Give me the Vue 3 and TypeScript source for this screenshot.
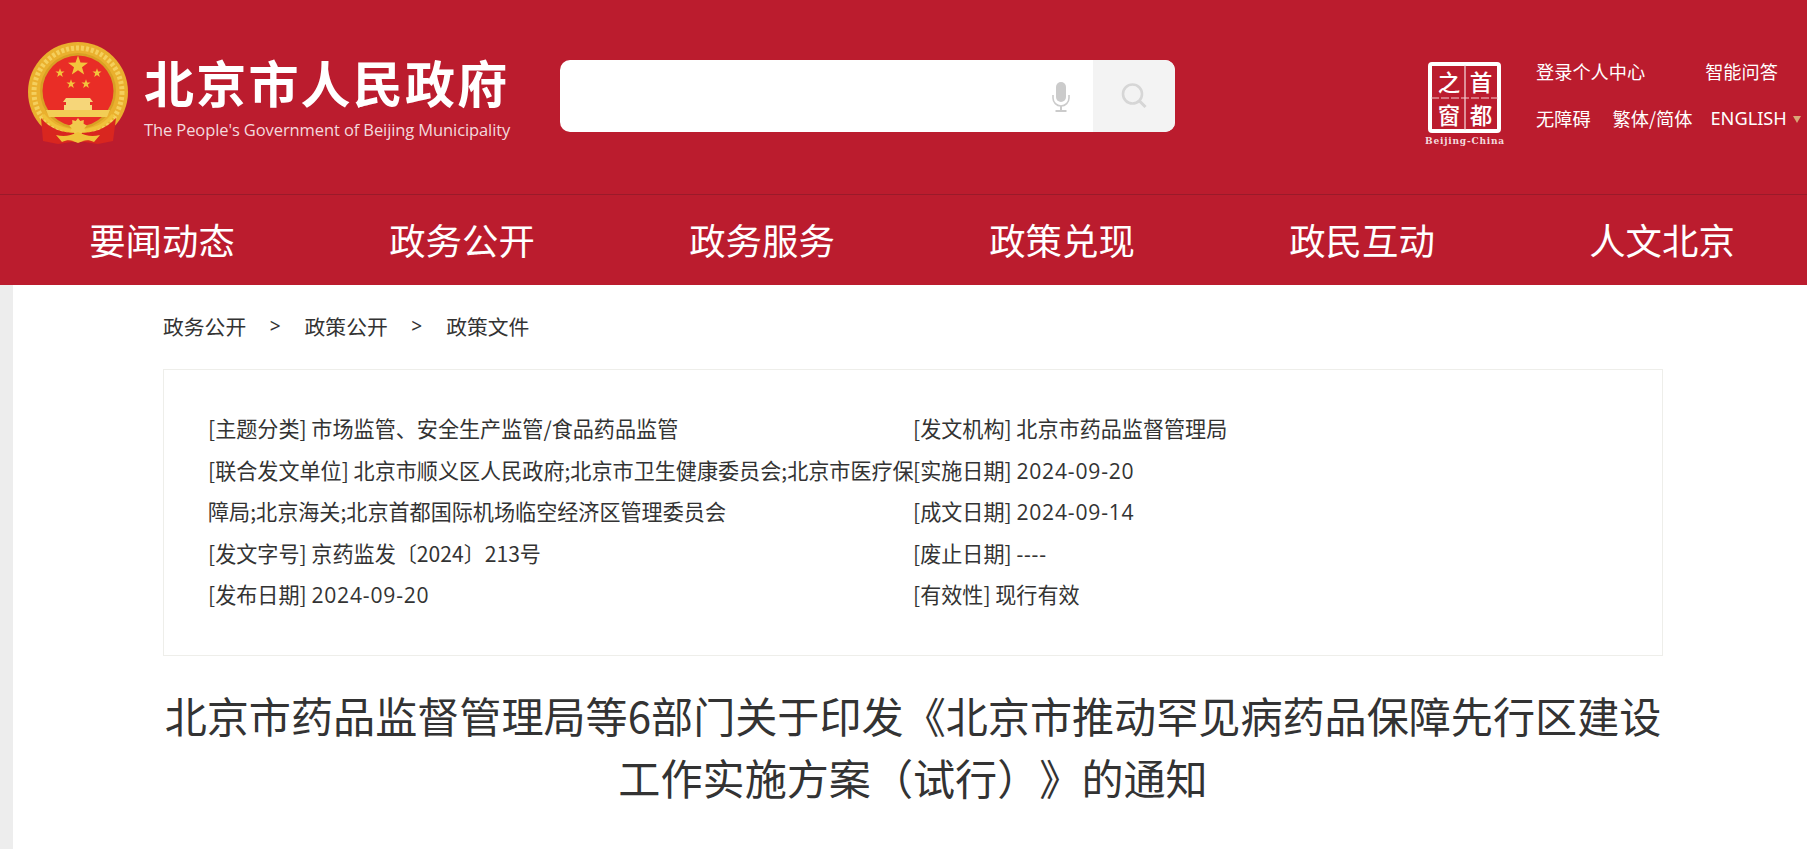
<script setup lang="ts">
interface MetaItem { label: string; value: string; num?: boolean }
const navItems: string[] = ['要闻动态', '政务公开', '政务服务', '政策兑现', '政民互动', '人文北京']
const crumbs: string[] = ['政务公开', '政策公开', '政策文件']
const leftMeta: MetaItem[] = [
  { label: '[主题分类]', value: '市场监管、安全生产监管/食品药品监管' },
  { label: '[联合发文单位]', value: '北京市顺义区人民政府;北京市卫生健康委员会;北京市医疗保障局;北京海关;北京首都国际机场临空经济区管理委员会' },
  { label: '[发文字号]', value: '京药监发〔2024〕213号' },
  { label: '[发布日期]', value: '2024-09-20', num: true },
]
const rightMeta: MetaItem[] = [
  { label: '[发文机构]', value: '北京市药品监督管理局' },
  { label: '[实施日期]', value: '2024-09-20', num: true },
  { label: '[成文日期]', value: '2024-09-14', num: true },
  { label: '[废止日期]', value: '----', num: true },
  { label: '[有效性]', value: '现行有效' },
]
function star(cx: number, cy: number, r: number, inner = 0.4, n = 5): string {
  const pts: string[] = []
  for (let i = 0; i < n * 2; i++) {
    const a = -Math.PI / 2 + (i * Math.PI) / n
    const rad = i % 2 === 0 ? r : r * inner
    pts.push(`${(cx + rad * Math.cos(a)).toFixed(2)},${(cy + rad * Math.sin(a)).toFixed(2)}`)
  }
  return pts.join(' ')
}
const stars: string[] = [star(50, 24, 10.5), star(32, 31, 4.8), star(69, 31, 4.8), star(43, 42, 4.8), star(58, 42, 4.8)]
const flower: string = star(50, 85, 9, 0.72, 9)
</script>

<template>
  <div class="page">
    <header class="top">
      <svg class="emblem" viewBox="0 0 100 106" aria-hidden="true">
        <circle cx="50" cy="50" r="50" fill="#eab02e" />
        <circle cx="50" cy="50" r="44" fill="none" stroke="#f5cf5c" stroke-width="5" stroke-dasharray="3 2" />
        <circle cx="50" cy="49" r="38" fill="#d9a024" />
        <circle cx="50" cy="49" r="35.500" fill="#e92d26" />
        <polygon v-for="(p, i) in stars" :key="i" :points="p" fill="#f3c43c" />
        <path d="M38 56h24l3 4h-3v3h2v5H36v-5h2v-3h-3z" fill="#f6d679" />
        <path d="M18 68h64l-3 7H21z" fill="#f3cd55" />
        <path d="M13 76L15 99 30 102 50 99 70 102 85 99 88 76C78 87 66 91 50 91 34 91 22 87 13 76z" fill="#d9261f" />
        <path d="M15 73C24 84 34 89 50 89 66 89 76 84 85 73" fill="none" stroke="#f0c23a" stroke-width="3.500" />
        <polygon :points="flower" fill="#f2c94d" />
        <path d="M28 93C36 95 42 94 50 90 58 94 64 95 72 93L66 100C60 97 56 98 50 101 44 98 40 97 34 100z" fill="#f0c23a" />
      </svg>
      <div class="brand">
        <div class="brand-cn">北京市人民政府</div>
        <div class="brand-en">The People's Government of Beijing Municipality</div>
      </div>
      <div class="search">
        <div class="search-input">
          <svg class="mic" viewBox="0 0 18 30" aria-hidden="true">
            <rect x="4" y="0" width="10" height="20" rx="5" fill="#cbcbcb" />
            <path d="M1 13v3a8 8 0 0 0 16 0v-3" fill="none" stroke="#cbcbcb" stroke-width="1.6" />
            <path d="M9 24v4M3.500 29h11" fill="none" stroke="#cbcbcb" stroke-width="2" />
          </svg>
        </div>
        <div class="search-btn">
          <svg class="glass" viewBox="0 0 26 26" aria-hidden="true">
            <circle cx="11.500" cy="11" r="9.500" fill="none" stroke="#d6d6d6" stroke-width="2.600" />
            <path d="M18.500 18l6 6" stroke="#d6d6d6" stroke-width="3" />
          </svg>
        </div>
      </div>
      <div class="seal-wrap">
        <svg class="seal" viewBox="0 0 73 71" aria-hidden="true">
          <rect x="2" y="2" width="69" height="67" rx="2" fill="none" stroke="#fff" stroke-width="4" />
          <path d="M37 3v65" stroke="#f7dde0" stroke-width="1.200" />
          <path d="M3 36h67" stroke="#f3c9ce" stroke-width="1.200" stroke-dasharray="8 2" />
        </svg>
        <span class="seal-c c1">之</span>
        <span class="seal-c c2">首</span>
        <span class="seal-c c3">窗</span>
        <span class="seal-c c4">都</span>
        <div class="seal-en">Beijing-China</div>
      </div>
      <div class="links">
        <div class="links-row first">
          <span>登录个人中心</span>
          <span>智能问答</span>
        </div>
        <div class="links-row second">
          <span>无障碍</span>
          <span>繁体/简体</span>
          <span class="eng">ENGLISH<i class="caret"></i></span>
        </div>
      </div>
    </header>
    <nav class="nav">
      <a v-for="item in navItems" :key="item" class="nav-item">{{ item }}</a>
    </nav>
    <div class="body">
      <div class="strip"></div>
      <main class="main">
        <div class="crumbs">
          <template v-for="(c, i) in crumbs" :key="c">
            <span v-if="i > 0" class="sep">&gt;</span>
            <span>{{ c }}</span>
          </template>
        </div>
        <section class="meta">
          <ul class="meta-col left">
            <li v-for="m in leftMeta" :key="m.label">
              <template v-if="m.num">{{ m.label }} <span class="num">{{ m.value }}</span></template>
              <template v-else>{{ m.label }} {{ m.value }}</template>
            </li>
          </ul>
          <ul class="meta-col right">
            <li v-for="m in rightMeta" :key="m.label">
              <template v-if="m.num">{{ m.label }} <span class="num">{{ m.value }}</span></template>
              <template v-else>{{ m.label }} {{ m.value }}</template>
            </li>
          </ul>
        </section>
        <h1 class="title">北京市药品监督管理局等6部门关于印发《北京市推动罕见病药品保障先行区建设工作实施方案（试行）》的通知</h1>
      </main>
    </div>
  </div>
</template>

<style>
html, body { margin: 0; padding: 0; background: #fff; overflow: hidden; }
</style>

<style scoped>
.page {
  width: 1807px;
  height: 849px;
  overflow: hidden;
  font-family: "Noto Sans CJK SC", "Noto Sans", sans-serif;
  color: #333;
  background: #fff;
  text-spacing-trim: space-all;
}
.top {
  height: 194px;
  background: #bb1c2e;
  display: flex;
  position: relative;
  box-sizing: border-box;
  padding-left: 28px;
  color: #fff;
}
.emblem {
  width: 100px;
  height: 106px;
  margin-top: 42px;
  flex: none;
}
.brand {
  width: 416px;
  margin-left: 16px;
  flex: none;
}
.brand-cn {
  font-size: 50px;
  line-height: 60px;
  margin-top: 51px;
  font-weight: 700;
  letter-spacing: 2.200px;
  white-space: nowrap;
}
.brand-en {
  font-family: "Open Sans", "Noto Sans", sans-serif;
  font-size: 16.500px;
  line-height: 24px;
  margin-top: 7px;
  color: #f3d9dd;
  white-space: nowrap;
  letter-spacing: -0.100px;
}
.search {
  width: 615px;
  height: 72px;
  margin-top: 60px;
  border-radius: 10px;
  overflow: hidden;
  display: flex;
  background: #fff;
  flex: none;
}
.search-input {
  flex: 1;
  display: flex;
  justify-content: flex-end;
  align-items: center;
  padding-right: 23px;
}
.mic { width: 18px; height: 30px; margin-top: 2px; }
.search-btn {
  width: 82px;
  background: #f3f3f3;
  display: flex;
  align-items: center;
  justify-content: center;
}
.glass { width: 26px; height: 26px; margin-top: -1px; }
.seal-wrap {
  position: relative;
  width: 82px;
  margin-left: 249px;
  margin-top: 62px;
  flex: none;
}
.seal { width: 73px; height: 71px; display: block; margin-left: 4px; }
.seal-c {
  position: absolute;
  font-size: 22.500px;
  font-weight: 500;
  line-height: 30px;
  width: 30px;
  text-align: center;
  color: #fff;
}
.c1 { left: 10px; top: 4px; }
.c2 { left: 42px; top: 4px; }
.c3 { left: 10px; top: 37px; }
.c4 { left: 42px; top: 37px; }
.seal-en {
  font-family: "DejaVu Serif", serif;
  font-size: 9px;
  font-weight: 700;
  line-height: 12px;
  margin-top: 2px;
  text-align: center;
  color: #f3d9dd;
  white-space: nowrap;
  letter-spacing: 0.800px;
}
.links {
  margin-left: 30px;
  font-size: 18.200px;
  flex: none;
}
.links-row { display: flex; white-space: nowrap; line-height: 26px; }
.links-row.first { margin-top: 58px; gap: 60px; }
.links-row.second { margin-top: 21px; gap: 22px; }
.eng { margin-left: -4px; font-family: "Noto Sans", sans-serif; font-size: 18.200px; position: relative; }
.caret {
  display: inline-block;
  width: 0;
  height: 0;
  border-left: 4px solid transparent;
  border-right: 4px solid transparent;
  border-top: 7px solid #d9a877;
  margin-left: 6px;
  vertical-align: 2px;
}
.nav {
  height: 90px;
  border-top: 1px solid #9a1a2a;
  background: #bb1c2e;
  display: flex;
  padding-left: 12px;
}
.nav-item {
  flex: none;
  width: 300px;
  text-align: center;
  font-size: 36.400px;
  line-height: 88px;
  color: #fff;
}
.body { display: flex; height: 564px; }
.strip { width: 13px; background: #ededed; flex: none; }
.main { width: 1500px; margin-left: 150px; flex: none; }
.crumbs {
  font-size: 20.800px;
  line-height: 30px;
  margin-top: 26px;
  display: flex;
  gap: 24px;
}
.sep { font-family: "Noto Sans", sans-serif; font-size: 19px; margin-left: -0.500px; }
.meta {
  margin-top: 28px;
  height: 287px;
  box-sizing: border-box;
  border: 1px solid #eeeeea;
  padding: 38px 46px 38px 44px;
  display: flex;
}
.meta-col {
  list-style: none;
  margin: 0;
  padding: 0;
  flex: none;
  font-size: 21.100px;
  line-height: 41.600px;
}
.meta-col.left { width: 712px; }
.meta-col.right { width: 700px; margin-left: -7px; }
.num {
  font-family: "Open Sans", "Noto Sans", sans-serif;
  letter-spacing: 0.800px;
}
.title {
  margin: 28px 0 0;
  font-size: 42.100px;
  line-height: 62px;
  font-weight: 400;
  text-align: center;
  color: #333;
}
</style>
